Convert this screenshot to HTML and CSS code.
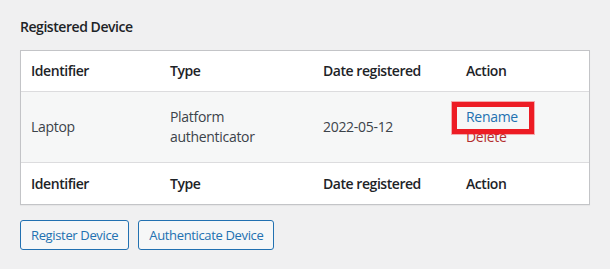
FILE: index.html
```html
<!DOCTYPE html>
<html lang="en">
<head>
<meta charset="utf-8">
<title>Registered Device</title>
<link rel="stylesheet" href="styles.css">
</head>
<body>
<div class="wrap">
  <h2 class="title">Registered Device</h2>
  <table class="devices">
    <thead>
      <tr>
        <th class="col-id">Identifier</th>
        <th class="col-type">Type</th>
        <th class="col-date">Date registered</th>
        <th class="col-action">Action</th>
      </tr>
    </thead>
    <tbody>
      <tr>
        <td>Laptop</td>
        <td>Platform<br>authenticator</td>
        <td>2022-05-12</td>
        <td class="actions"><span class="highlight"><a href="#" class="link">Rename</a></span><br><a href="#" class="delete">Delete</a></td>
      </tr>
    </tbody>
    <tfoot>
      <tr>
        <th>Identifier</th>
        <th>Type</th>
        <th>Date registered</th>
        <th>Action</th>
      </tr>
    </tfoot>
  </table>
  <div class="buttons">
    <button class="button" type="button">Register Device</button>
    <button class="button" type="button">Authenticate Device</button>
  </div>
</div>
</body>
</html>
```

FILE: styles.css
```css
html, body {
  margin: 0;
  padding: 0;
  background: #f0f0f1;
}

body {
  font-family: "Open Sans", "Noto Sans", sans-serif;
  font-size: 14px;
  color: #3c434a;
  letter-spacing: -0.3px;
}

.wrap {
  padding: 17px 20px 20px 20px;
}

.title {
  margin: 0 0 13px 0;
  font-size: 14px;
  line-height: 20px;
  font-weight: 600;
  color: #1d2327;
  letter-spacing: -0.45px;
}

.devices {
  width: 570px;
  border-collapse: separate;
  border-spacing: 0;
  border: 1px solid #c3c4c7;
  background: #fff;
  box-shadow: 0 1px 1px rgba(0, 0, 0, 0.04);
}

.devices th,
.devices td {
  padding: 0 10px;
  text-align: left;
  vertical-align: middle;
  line-height: 19.6px;
}

.devices th {
  font-weight: 600;
  color: #1d2327;
  letter-spacing: -0.45px;
}

.devices thead th {
  height: 40px;
  border-bottom: 1px solid #dcdcde;
}

.devices tbody td {
  height: 70px;
  background: #f6f7f7;
}

.devices tfoot th {
  height: 41px;
  border-top: 1px solid #dcdcde;
}

.col-id { width: 119px; }
.col-type { width: 133px; }
.col-date { width: 123px; }
.col-action { width: 113px; }

.actions {
  line-height: 20px;
}

.link {
  color: #2271b1;
  text-decoration: none;
}

.delete {
  color: #b32d2e;
  text-decoration: none;
}

.highlight {
  position: relative;
  display: inline-block;
}

.highlight::after {
  content: "";
  position: absolute;
  left: -14px;
  right: -16px;
  top: -5px;
  bottom: -7px;
  border: 5px solid #ed1c24;
  box-shadow: 0 0 0 1px rgba(237, 28, 36, 0.35);
  pointer-events: none;
}

.buttons {
  display: flex;
  gap: 9px;
  margin-top: 15px;
}

.button {
  font-family: "Open Sans", "Noto Sans", sans-serif;
  font-size: 13px;
  letter-spacing: -0.35px;
  line-height: 28px;
  min-height: 30px;
  padding: 0 10px;
  margin: 0;
  color: #2271b1;
  background: #f6f7f7;
  border: 1px solid #2271b1;
  border-radius: 3px;
  cursor: pointer;
}
```
